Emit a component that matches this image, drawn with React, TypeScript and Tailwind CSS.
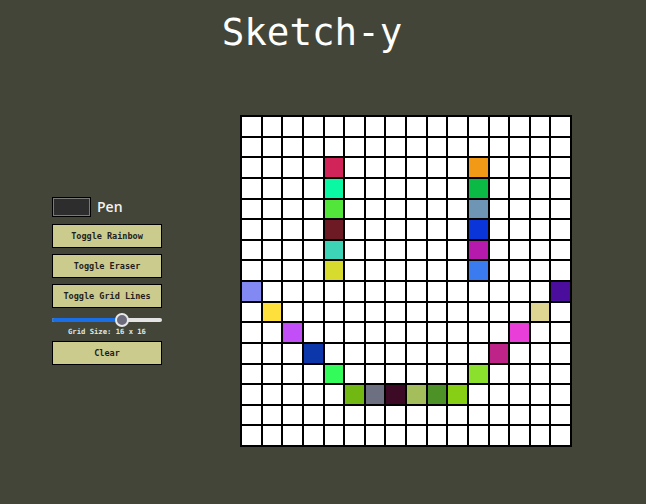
import React from "react";

const colored: Record<string, string> = {
  "2,4": "#d12458",
  "3,4": "#0af7a4",
  "4,4": "#52e63a",
  "5,4": "#6e1a25",
  "6,4": "#3dd3b7",
  "7,4": "#d6db2e",
  "2,11": "#f29a18",
  "3,11": "#0bba44",
  "4,11": "#6f95b5",
  "5,11": "#0a36d9",
  "6,11": "#b61aad",
  "7,11": "#3a7cf0",
  "8,0": "#8289f2",
  "9,1": "#fde03c",
  "10,2": "#c14ef7",
  "11,3": "#0b37ab",
  "12,4": "#33fb59",
  "13,5": "#72b813",
  "13,6": "#6c7080",
  "13,7": "#3c0a25",
  "13,8": "#a3be5b",
  "13,9": "#4c9226",
  "13,10": "#86cf14",
  "12,11": "#8ae02c",
  "11,12": "#be2488",
  "10,13": "#ea3ed8",
  "9,14": "#ded593",
  "8,15": "#4b0e9c",
};

const mono = { fontFamily: '"DejaVu Sans Mono", "Liberation Mono", monospace' };

function Btn({ label, className = "" }: { label: string; className?: string }) {
  return (
    <button
      className={`w-[110px] h-[24px] bg-[#cbcb8e] border border-black text-[8.5px] font-bold text-[#1e1e1e] leading-none ${className}`}
      style={mono}
    >
      {label}
    </button>
  );
}

export default function App() {
  const cells = [];
  for (let r = 0; r < 16; r++) {
    for (let c = 0; c < 16; c++) {
      const col = colored[`${r},${c}`];
      cells.push(
        <div
          key={`${r}-${c}`}
          className="aspect-square border border-black"
          style={{ backgroundColor: col ?? "#ffffff" }}
        />
      );
    }
  }

  return (
    <div className="min-h-screen w-full bg-[#424538]">
      <div className="ml-[52px] w-[520px] pt-[10px]">
        <h1
          className="text-center text-white text-[37.5px] leading-[44px] font-normal"
          style={mono}
        >
          Sketch-y
        </h1>
        <div className="mt-[61px] flex items-center gap-[78px]">
          <div className="flex w-[110px] flex-col">
            <div className="flex h-[20px] items-center">
              <div className="h-[20px] w-[39px] border border-black">
                <div className="h-full w-full border border-[#7a7a7a] bg-[#2d2d2d]" />
              </div>
              <span
                className="ml-[6px] text-[14px] font-semibold text-[#f2f2f2] leading-none"
                style={{ fontFamily: '"Open Sans", "DejaVu Sans", sans-serif' }}
              >
                Pen
              </span>
            </div>
            <Btn label="Toggle Rainbow" className="mt-[7px]" />
            <Btn label="Toggle Eraser" className="mt-[6px]" />
            <Btn label="Toggle Grid Lines" className="mt-[6px]" />
            <div className="relative mt-[5px] h-[14px] w-[110px]">
              <div className="absolute left-0 top-[5px] h-[4px] w-[110px] rounded-full bg-[#e4e4e4]" />
              <div className="absolute left-0 top-[5px] h-[4px] w-[70px] rounded-full bg-[#1a6fe6]" />
              <div className="absolute left-[63px] top-0 h-[14px] w-[14px] rounded-full border-2 border-[#e8e8e8] bg-[#6c6c7c]" />
            </div>
            <div
              className="h-[9px] text-center text-[7.2px] font-bold leading-[9px] text-[#dfe6e0]"
              style={mono}
            >
              Grid Size: 16 x 16
            </div>
            <Btn label="Clear" className="mt-[5px]" />
          </div>
          <div className="grid w-[332px] grid-cols-16 border border-black">
            {cells}
          </div>
        </div>
      </div>
    </div>
  );
}
